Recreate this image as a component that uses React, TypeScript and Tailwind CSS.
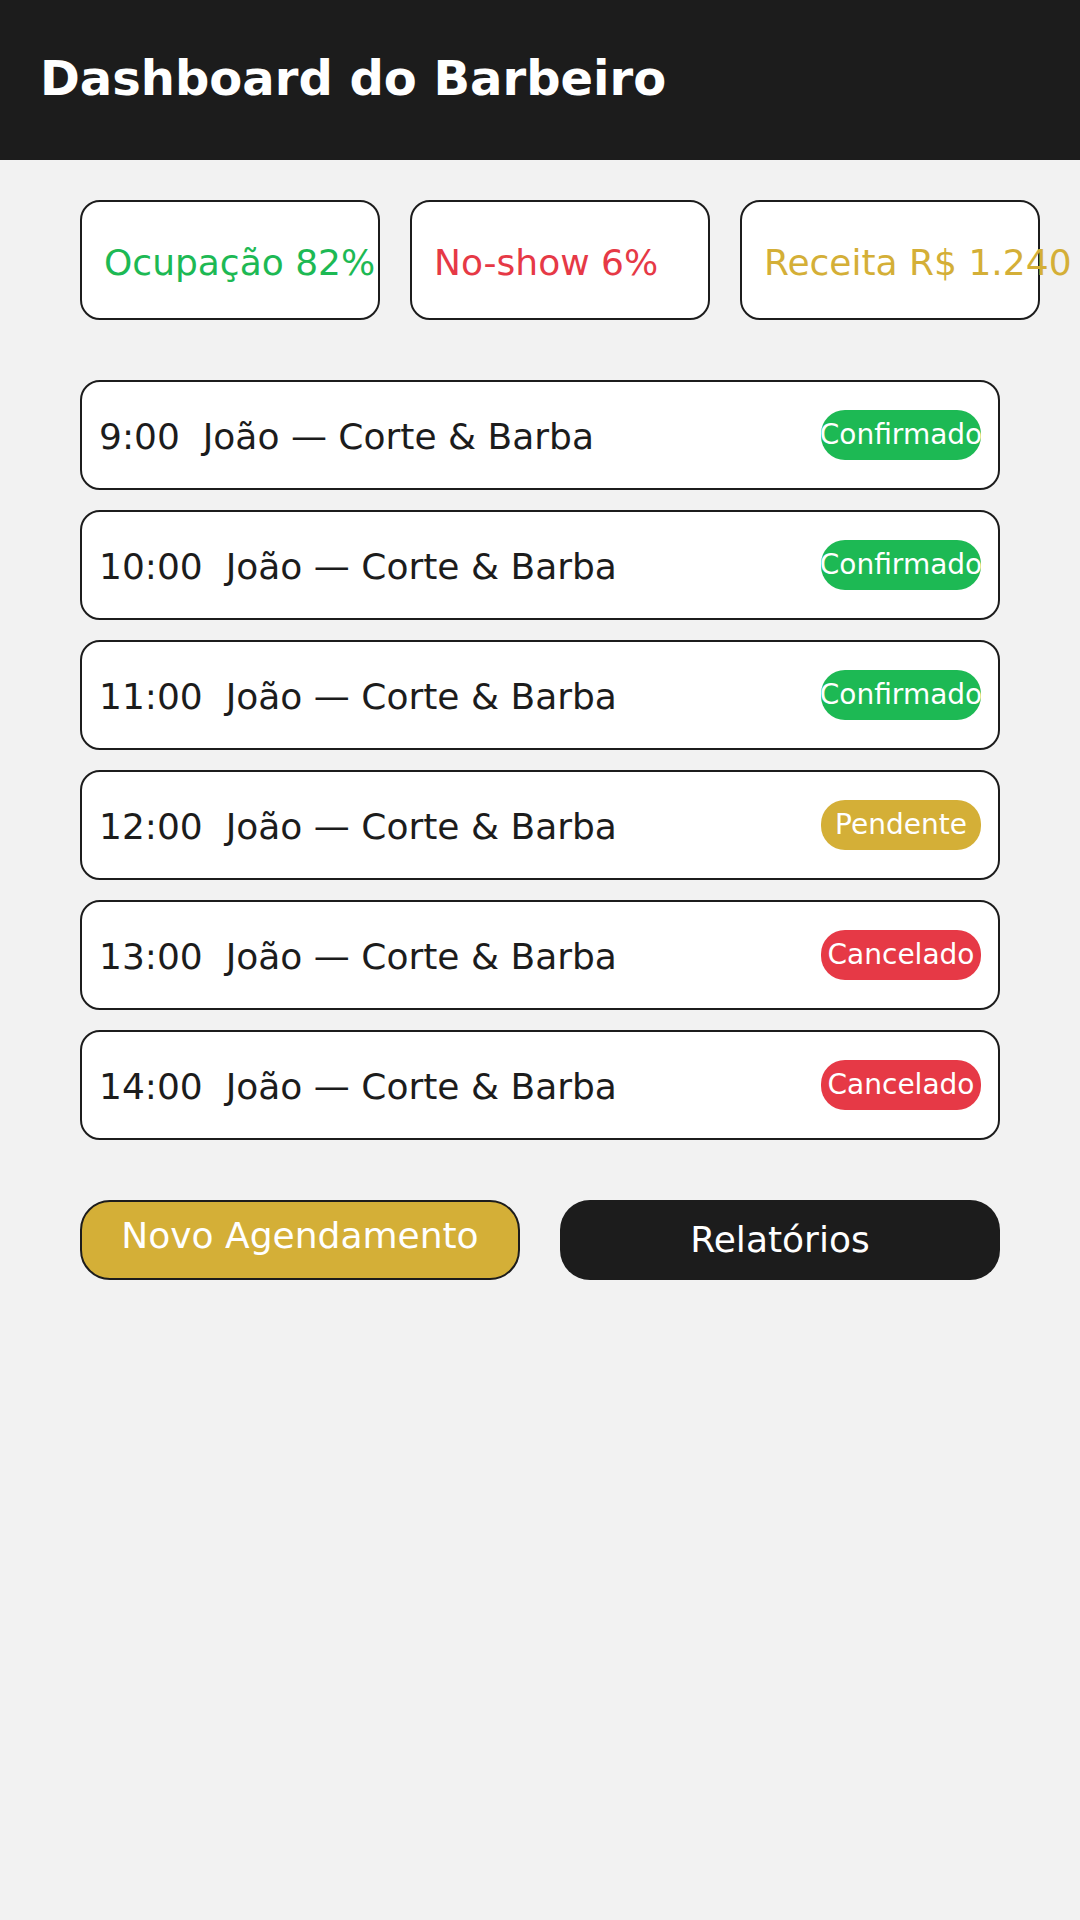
import React from "react";

const stats = [
  { label: "Ocupação 82%", color: "text-[#1db954]" },
  { label: "No-show 6%", color: "text-[#e63946]" },
  { label: "Receita R$ 1.240", color: "text-[#d4af37]" },
];

type Status = "Confirmado" | "Pendente" | "Cancelado";

const rows: { time: string; status: Status }[] = [
  { time: "9:00", status: "Confirmado" },
  { time: "10:00", status: "Confirmado" },
  { time: "11:00", status: "Confirmado" },
  { time: "12:00", status: "Pendente" },
  { time: "13:00", status: "Cancelado" },
  { time: "14:00", status: "Cancelado" },
];

const badgeColor: Record<Status, string> = {
  Confirmado: "bg-[#1db954]",
  Pendente: "bg-[#d4af37]",
  Cancelado: "bg-[#e63946]",
};

export default function App() {
  return (
    <div
      className="min-h-screen bg-[#f2f2f2] text-[#1c1c1c]"
      style={{ fontFamily: '"DejaVu Sans", "Noto Sans", sans-serif' }}
    >
      <header className="h-[160px] bg-[#1c1c1c] flex items-center px-[40px] pb-[4px]">
        <h1 className="text-[48px] font-bold text-white">Dashboard do Barbeiro</h1>
      </header>

      <main className="px-[80px] pt-[40px]">
        <div className="flex gap-[30px]">
          {stats.map((s) => (
            <div
              key={s.label}
              className="w-[300px] h-[120px] shrink-0 bg-white border-2 border-[#1c1c1c] rounded-[20px] flex items-center pl-[22px] pt-[6px] whitespace-nowrap"
            >
              <span className={`text-[36px] ${s.color}`}>{s.label}</span>
            </div>
          ))}
        </div>

        <div className="mt-[60px] w-[920px] flex flex-col gap-[20px]">
          {rows.map((r) => (
            <div
              key={r.time}
              className="h-[110px] bg-white border-2 border-[#1c1c1c] rounded-[20px] flex items-center justify-between pl-[17px] pr-[17px]"
            >
              <span className="text-[36px] whitespace-pre pt-[4px]">{`${r.time}  João — Corte & Barba`}</span>
              <span
                className={`w-[160px] h-[50px] rounded-[24px] flex items-center justify-center whitespace-nowrap text-[28px] text-white ${badgeColor[r.status]}`}
              >
                {r.status}
              </span>
            </div>
          ))}
        </div>

        <div className="mt-[60px] flex gap-[40px]">
          <button className="w-[440px] h-[80px] rounded-[30px] bg-[#d4af37] border-2 border-[#1c1c1c] text-white text-[36px] flex items-center justify-center pb-[8px]">
            Novo Agendamento
          </button>
          <button className="w-[440px] h-[80px] rounded-[30px] bg-[#1c1c1c] text-white text-[36px] flex items-center justify-center">
            Relatórios
          </button>
        </div>
      </main>
    </div>
  );
}
